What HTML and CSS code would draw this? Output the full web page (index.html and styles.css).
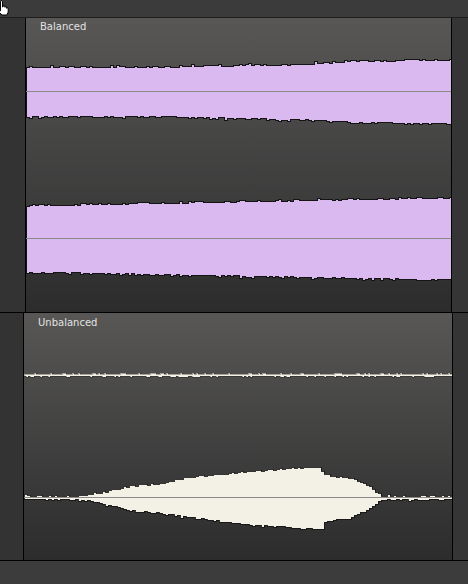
FILE: index.html
```html
<!DOCTYPE html>
<html>
<head>
<meta charset="utf-8">
<link rel="stylesheet" href="styles.css">
</head>
<body>
<div class="app">
  <div class="topbar">
    <svg class="cursor" width="14" height="16" viewBox="0 0 14 16">
      <path d="M5.5,1.5 Q6.5,0 7.5,1.5 V7 H8 V6.2 Q9,5.4 9.8,6.2 V7.2 Q10.6,6.5 11.5,7.2 V8.2 Q12.3,7.6 13.2,8.4 V12 L12,15 H7 L2.5,10.5 Q2.6,9.2 4.2,9.6 L5.5,10.8 Z" fill="#fff" stroke="#000" stroke-width="1" stroke-linejoin="round"/>
    </svg>
  </div>
  <div class="track t1">
    <div class="side"></div>
    <div class="wave">
      <svg class="wsvg" id="w1" width="425" height="294" viewBox="0 0 425 294"></svg>
      <span class="label">Balanced</span>
    </div>
    <div class="rside"></div>
  </div>
  <div class="track t2">
    <div class="side"></div>
    <div class="wave">
      <svg class="wsvg" id="w2" width="428" height="247" viewBox="0 0 428 247"></svg>
      <span class="label">Unbalanced</span>
    </div>
    <div class="rside"></div>
  </div>
  <div class="bottombar"></div>
</div>
<script src="script.js"></script>
</body>
</html>
```
FILE: styles.css
```css
html, body {
  margin: 0;
  padding: 0;
  background: #3b3b3b;
  width: 468px;
  height: 584px;
  overflow: hidden;
}
.app {
  display: flex;
  flex-direction: column;
  width: 468px;
  height: 584px;
}
.topbar {
  height: 17px;
  background: #3b3b3b;
  border-bottom: 1px solid #1e1e1e;
  position: relative;
  flex: none;
}
.cursor {
  position: absolute;
  left: -5px;
  top: 0;
}
.track {
  display: flex;
  flex: none;
  border-bottom: 1px solid #000;
}
.t1 { height: 294px; }
.t2 { height: 247px; }
.side {
  background: #333333;
  border-right: 1px solid #000;
  flex: none;
}
.t1 .side { width: 25px; }
.t2 .side { width: 23px; }
.rside {
  background: #353535;
  border-left: 1px solid #000;
  flex: none;
}
.t1 .rside { width: 16px; }
.t2 .rside { width: 15px; }
.wave {
  flex: 1;
  position: relative;
  background: linear-gradient(#585756, #2c2c2c);
  overflow: hidden;
}
.wsvg {
  display: block;
}
.label {
  position: absolute;
  left: 14px;
  top: 3px;
  font-family: "DejaVu Sans", sans-serif;
  font-size: 10px;
  line-height: 12px;
  color: #e2e2e2;
}
.t2 .label { top: 4px; }
.bottombar {
  flex: 1;
  background: #3c3c3c;
}
```
FILE: script.js
```js
(function () {
  var NS = 'http://www.w3.org/2000/svg';
  function rng(seed) {
    return function () {
      seed = (seed * 1103515245 + 12345) & 0x7fffffff;
      return seed / 0x7fffffff;
    };
  }
  function interp(pts) {
    return function (x) {
      if (x <= pts[0][0]) return pts[0][1];
      for (var i = 1; i < pts.length; i++) {
        if (x <= pts[i][0]) {
          var a = pts[i - 1], b = pts[i];
          return a[1] + (b[1] - a[1]) * (x - a[0]) / (b[0] - a[0]);
        }
      }
      return pts[pts.length - 1][1];
    };
  }
  function lane(svg, w, c, ampT, ampB, rand, step, fill, noise, strokeOp) {
    var tops = [], bots = [];
    for (var x = 0; x < w; x += step) {
      var nt = Math.round(rand() * rand() * noise);
      var nb = Math.round(rand() * rand() * noise);
      tops.push([x, Math.round(c - ampT(x) - nt)]);
      bots.push([x, Math.round(c + ampB(x) + nb)]);
    }
    var d = 'M0,' + tops[0][1];
    for (var i = 0; i < tops.length; i++) {
      var xe = Math.min(tops[i][0] + step, w);
      d += ' V' + tops[i][1] + ' H' + xe;
    }
    for (var j = bots.length - 1; j >= 0; j--) {
      d += ' V' + bots[j][1] + ' H' + bots[j][0];
    }
    d += ' Z';
    var p = document.createElementNS(NS, 'path');
    p.setAttribute('d', d);
    p.setAttribute('fill', fill);
    p.setAttribute('stroke', '#141414');
    p.setAttribute('stroke-opacity', strokeOp);
    p.setAttribute('stroke-width', '1');
    p.setAttribute('shape-rendering', 'crispEdges');
    svg.appendChild(p);
  }
  function line(svg, w, y, color) {
    var r = document.createElementNS(NS, 'rect');
    r.setAttribute('x', 0);
    r.setAttribute('y', y);
    r.setAttribute('width', w);
    r.setAttribute('height', 1);
    r.setAttribute('fill', color);
    svg.appendChild(r);
  }

  var purple = '#dab9f0';
  var cream = '#f3f0e5';

  // Track 1
  var s1 = document.getElementById('w1');
  var r1 = rng(7);
  var a1 = interp([[0, 24.5], [150, 25], [270, 27], [320, 30], [425, 32]]);
  var b1 = interp([[0, 24.5], [150, 25], [270, 27.5], [320, 30], [425, 32]]);
  lane(s1, 425, 73.5, a1, b1, r1, 3, purple, 2.2, 1);
  line(s1, 425, 73, '#8a8a8a');
  var a2 = interp([[0, 33], [425, 41]]);
  var b2 = interp([[0, 33], [425, 41]]);
  lane(s1, 425, 220.5, a2, b2, r1, 3, purple, 2.2, 1);
  line(s1, 425, 220, '#8a8a8a');

  // Track 2
  var s2 = document.getElementById('w2');
  var r2 = rng(11);
  var flat = function () { return 0.8; };
  lane(s2, 428, 62, flat, flat, r2, 2, cream, 1.4, 0.35);
  var env = [[0, 1.2], [46, 1.5], [66, 3], [86, 7], [103, 11], [133, 14], [169, 21], [226, 26], [276, 30], [296, 31], [298, 23], [326, 19], [341, 13], [351, 6], [356, 1.5], [428, 1.0]];
  var envB = [[0, 1.2], [46, 1.5], [66, 3], [86, 7], [103, 12], [133, 15], [169, 20], [226, 27], [276, 30], [298, 31], [300, 23], [326, 20], [341, 12], [351, 5], [356, 1.5], [428, 1.0]];
  lane(s2, 428, 184.5, interp(env), interp(envB), r2, 3, cream, 2.0, 0.85);
  line(s2, 428, 184, '#8a8a8a');
})();
```
